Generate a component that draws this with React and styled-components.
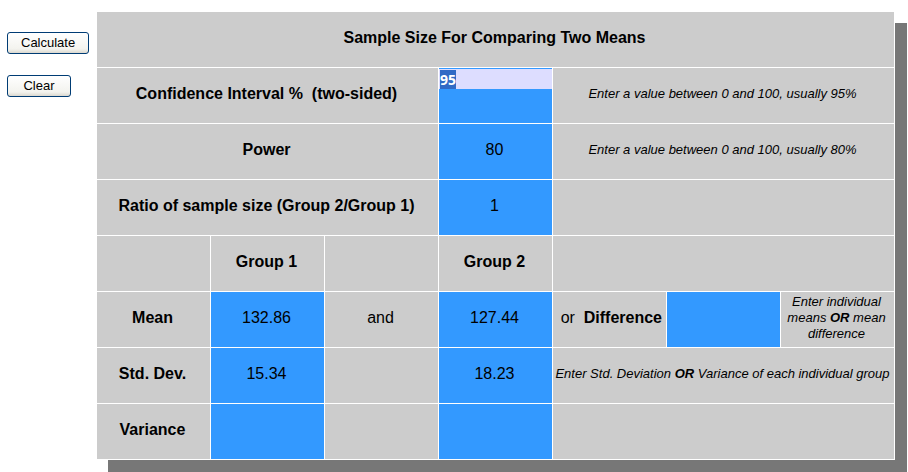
import React, { useEffect, useRef, useState } from "react";
import styled, { createGlobalStyle, css } from "styled-components";

const GlobalStyle = createGlobalStyle`
  body {
    margin: 0;
    background: #fff;
    color: #000;
    font-family: "Liberation Sans", Arial, sans-serif;
    font-size: 16px;
    line-height: 18px;
  }
`;

const Page = styled.form`
  display: flex;
  align-items: flex-start;
  padding: 11px 13px 12px 0;
`;

const Actions = styled.div`
  flex: 0 0 96px;
  box-sizing: border-box;
  display: flex;
  flex-direction: column;
  align-items: flex-start;
  gap: 21px;
  padding: 21px 0 0 7px;
`;

const ActionButton = styled.button`
  height: 22px;
  min-width: 64px;
  padding: 0 13px;
  border: 1px solid #003c74;
  border-radius: 3px;
  background: linear-gradient(#fff, #f3f3ee 80%, #dbd8cf);
  color: #000;
  font-family: inherit;
  font-size: 13px;
  line-height: 18px;
`;

const Sheet = styled.table`
  flex: 1;
  width: 100%;
  table-layout: fixed;
  border-collapse: separate;
  border-spacing: 1px;
  background: #fff;
  box-shadow: 12px 12px 0 #777;
`;

const cell = css`
  box-sizing: border-box;
  height: 55px;
  padding: 0 2px 4px 0;
  background: #ccc;
  text-align: center;
  vertical-align: middle;
`;

const Heading = styled.th`
  ${cell}
  font-weight: bold;
  white-space: pre-wrap;
`;

const TextCell = styled.td`
  ${cell}
  white-space: pre-wrap;
`;

const AlternativeCell = styled(TextCell)`
  padding-right: 4px;
  text-align: right;
`;

const NoteCell = styled(TextCell)`
  font-size: 13px;
  line-height: 16px;
  font-style: italic;
`;

const EntryCell = styled.td`
  ${cell}
  padding: 0;
  background: #39f;
  vertical-align: ${(p) => (p.$editing ? "top" : "middle")};
`;

const Entry = styled.input`
  display: block;
  box-sizing: border-box;
  width: 100%;
  height: 55px;
  padding: 0 2px 4px 0;
  border: 0;
  outline: 0;
  background: transparent;
  color: #000;
  font-family: inherit;
  font-size: 16px;
  text-align: center;

  &::selection {
    background: #316ac5;
    color: #fff;
  }

  ${(p) =>
    p.$editing &&
    css`
      height: 20px;
      margin-top: 1px;
      padding: 0 1px;
      background: #ddf;
      font: bold 14px/18px "Noto Sans", sans-serif;
      text-align: left;
    `}
`;

const initial = {
  confidence: "95",
  power: "80",
  ratio: "1",
  mean1: "132.86",
  mean2: "127.44",
  difference: "",
  sd1: "15.34",
  sd2: "18.23",
  variance1: "",
  variance2: "",
};

const columns = [0, 1, 2, 3, 4, 5, 6];

export default function App() {
  const [values, setValues] = useState(initial);
  const [active, setActive] = useState("confidence");
  const first = useRef(null);

  useEffect(() => {
    first.current.focus();
    first.current.select();
  }, []);

  const entry = (name, label) => (
    <EntryCell $editing={active === name}>
      <Entry
        ref={name === "confidence" ? first : undefined}
        aria-label={label}
        value={values[name]}
        $editing={active === name}
        onFocus={(e) => {
          setActive(name);
          e.target.select();
        }}
        onChange={(e) => setValues({ ...values, [name]: e.target.value })}
      />
    </EntryCell>
  );

  const clear = () =>
    setValues(Object.fromEntries(Object.keys(initial).map((k) => [k, ""])));

  return (
    <>
      <GlobalStyle />
      <Page onSubmit={(e) => e.preventDefault()}>
        <Actions>
          <ActionButton type="submit">Calculate</ActionButton>
          <ActionButton type="button" onClick={clear}>
            Clear
          </ActionButton>
        </Actions>
        <Sheet>
          <colgroup>
            {columns.map((c) => (
              <col key={c} />
            ))}
          </colgroup>
          <thead>
            <tr>
              <Heading colSpan={7}>Sample Size For Comparing Two Means</Heading>
            </tr>
          </thead>
          <tbody>
            <tr>
              <Heading colSpan={3} scope="row">
                {"Confidence Interval %  (two-sided)"}
              </Heading>
              {entry("confidence", "Confidence Interval %")}
              <NoteCell colSpan={3}>
                Enter a value between 0 and 100, usually 95%
              </NoteCell>
            </tr>
            <tr>
              <Heading colSpan={3} scope="row">
                Power
              </Heading>
              {entry("power", "Power")}
              <NoteCell colSpan={3}>
                Enter a value between 0 and 100, usually 80%
              </NoteCell>
            </tr>
            <tr>
              <Heading colSpan={3} scope="row">
                Ratio of sample size (Group 2/Group 1)
              </Heading>
              {entry("ratio", "Ratio of sample size")}
              <TextCell colSpan={3} />
            </tr>
            <tr>
              <TextCell />
              <Heading scope="col">Group 1</Heading>
              <TextCell />
              <Heading scope="col">Group 2</Heading>
              <TextCell colSpan={3} />
            </tr>
            <tr>
              <Heading scope="row">Mean</Heading>
              {entry("mean1", "Mean, Group 1")}
              <TextCell>and</TextCell>
              {entry("mean2", "Mean, Group 2")}
              <AlternativeCell>
                {"or  "}
                <b>Difference</b>
              </AlternativeCell>
              {entry("difference", "Difference")}
              <NoteCell>
                Enter individual means <b>OR</b> mean difference
              </NoteCell>
            </tr>
            <tr>
              <Heading scope="row">Std. Dev.</Heading>
              {entry("sd1", "Std. Dev., Group 1")}
              <TextCell />
              {entry("sd2", "Std. Dev., Group 2")}
              <NoteCell colSpan={3}>
                Enter Std. Deviation <b>OR</b> Variance of each individual group
              </NoteCell>
            </tr>
            <tr>
              <Heading scope="row">Variance</Heading>
              {entry("variance1", "Variance, Group 1")}
              <TextCell />
              {entry("variance2", "Variance, Group 2")}
              <TextCell colSpan={3} />
            </tr>
          </tbody>
        </Sheet>
      </Page>
    </>
  );
}
